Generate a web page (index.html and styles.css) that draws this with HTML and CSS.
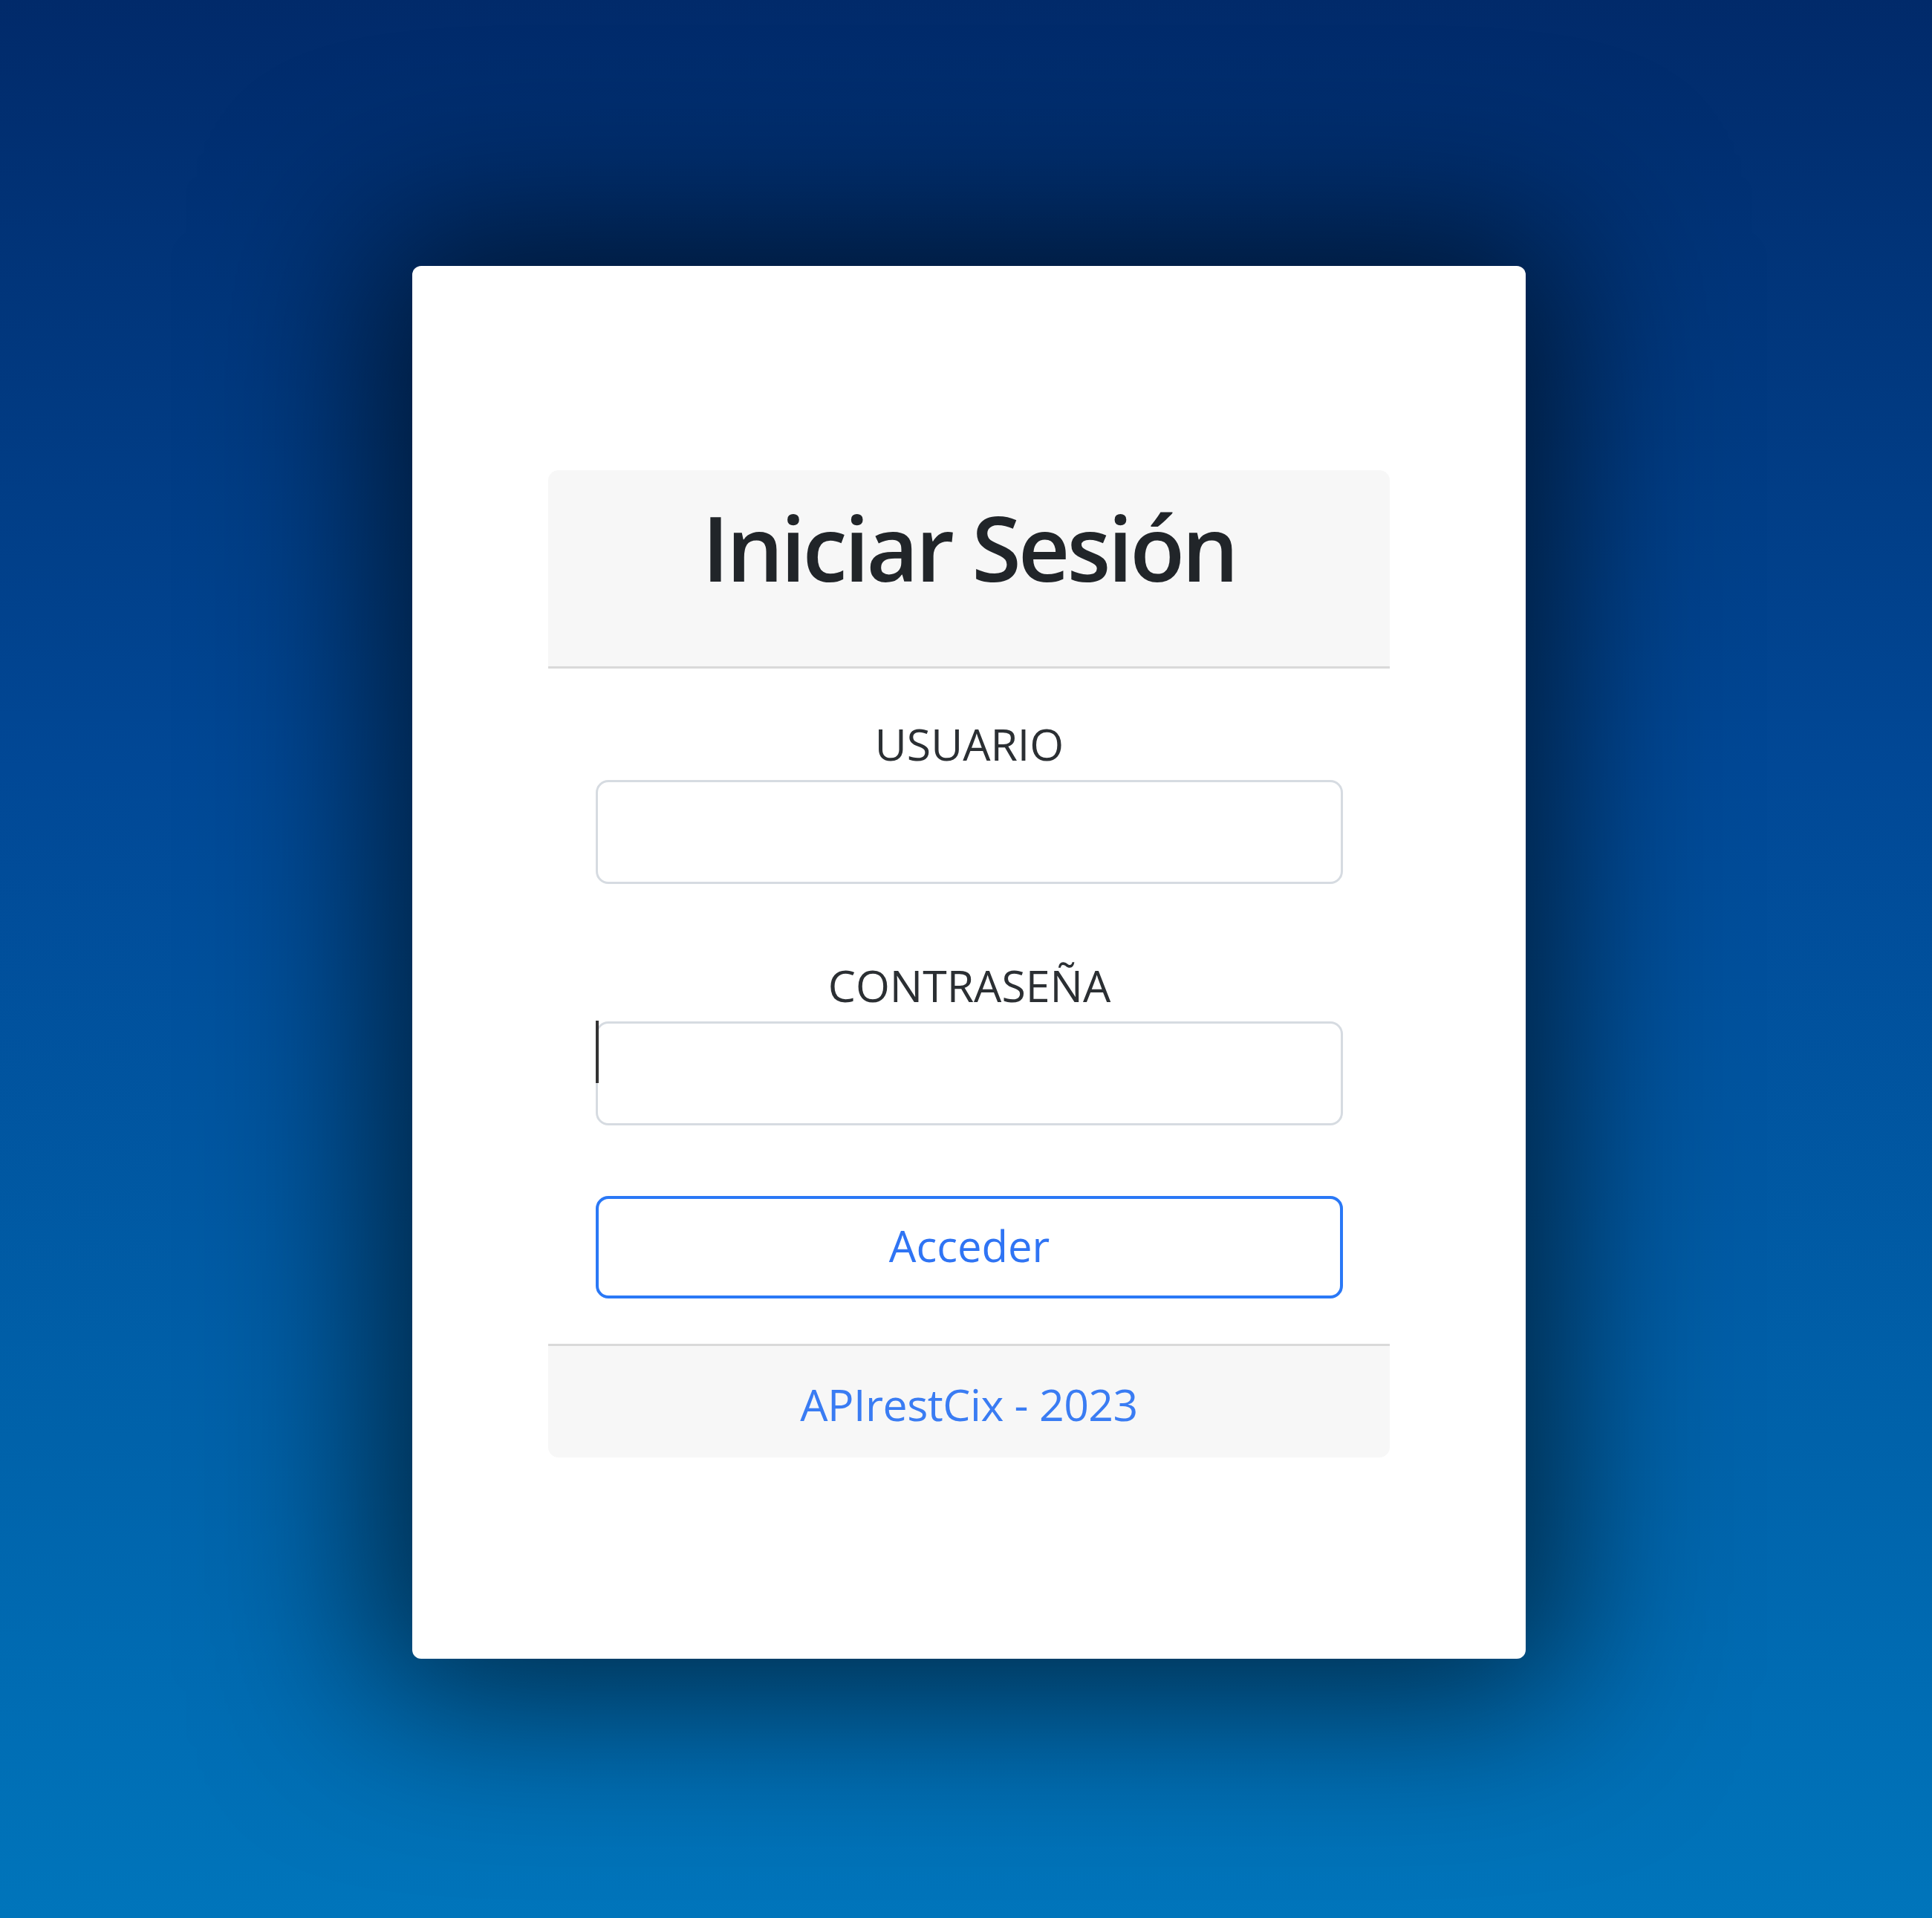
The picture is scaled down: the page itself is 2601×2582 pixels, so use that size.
FILE: index.html
```html
<!DOCTYPE html>
<html lang="es">
<head>
<meta charset="utf-8">
<title>Iniciar Sesión</title>
<link rel="stylesheet" href="styles.css">
</head>
<body>
<main class="page">
  <div class="outer-card">
    <div class="login-card">
      <div class="login-header">
        <h1 class="login-title">Iniciar Sesión</h1>
      </div>
      <form class="login-body">
        <label class="field-label" for="usuario">USUARIO</label>
        <input class="field-input" id="usuario" type="text">
        <label class="field-label field-label-second" for="clave">CONTRASEÑA</label>
        <div class="input-wrap">
          <input class="field-input" id="clave" type="password">
          <span class="caret"></span>
        </div>
        <button class="btn-acceder" type="button">Acceder</button>
      </form>
      <div class="login-footer">
        <span class="footer-text">APIrestCix - 2023</span>
      </div>
    </div>
  </div>
</main>
</body>
</html>
```

FILE: styles.css
```css
html, body {
  margin: 0;
  padding: 0;
}

body {
  font-family: "Open Sans", "Noto Sans", "Liberation Sans", sans-serif;
  color: #212529;
  background: linear-gradient(180deg, #012a6a 0%, #014896 40%, #0062aa 75%, #0075bb 100%);
}

.page {
  min-height: 2582px;
  display: flex;
  align-items: center;
  justify-content: center;
  padding: 9px 0 0 8px;
  box-sizing: border-box;
}

.outer-card {
  width: 1499px;
  height: 1875px;
  box-sizing: border-box;
  background: #ffffff;
  border-radius: 12px;
  padding: 275px 183px 0;
  box-shadow: 0 0 230px 50px rgba(0, 0, 0, 0.62);
}

.login-card {
  display: flex;
  flex-direction: column;
  border-radius: 14px;
  overflow: hidden;
}

.login-header {
  background: #f7f7f7;
  border-bottom: 3px solid #d9d9d9;
  padding: 30px 0 88px;
  text-align: center;
}

.login-title {
  margin: 0;
  font-size: 121px;
  line-height: 146px;
  font-weight: 600;
  letter-spacing: -4px;
  color: #212529;
}

.login-body {
  display: flex;
  flex-direction: column;
  align-items: center;
  padding: 57px 63px 61px 64px;
  margin: 0;
}

.field-label {
  font-size: 59px;
  line-height: 88px;
  color: #2b2f33;
  margin-bottom: 5px;
}

.field-label-second {
  margin-top: 92px;
}

.field-input {
  display: block;
  width: 100%;
  height: 140px;
  box-sizing: border-box;
  border: 3px solid #d6dbe1;
  border-radius: 17px;
  background: #ffffff;
  margin: 0;
  padding: 0 36px;
  font-size: 59px;
  font-family: inherit;
  outline: none;
}

.input-wrap {
  position: relative;
  width: 100%;
}

.caret {
  position: absolute;
  left: 0;
  top: -1px;
  width: 4px;
  height: 84px;
  background: #333333;
}

.btn-acceder {
  margin-top: 95px;
  width: 100%;
  height: 138px;
  box-sizing: border-box;
  border: 4px solid #2a78f6;
  border-radius: 17px;
  background: #ffffff;
  color: #2f74f4;
  font-family: inherit;
  font-size: 58px;
  line-height: 88px;
  padding: 0 0 4px;
  cursor: pointer;
}

.login-footer {
  background: #f7f7f7;
  border-top: 3px solid #d9d9d9;
  padding: 34px 0 28px;
  text-align: center;
}

.footer-text {
  font-size: 59px;
  line-height: 88px;
  letter-spacing: -0.5px;
  color: #3a7cf3;
}
```
